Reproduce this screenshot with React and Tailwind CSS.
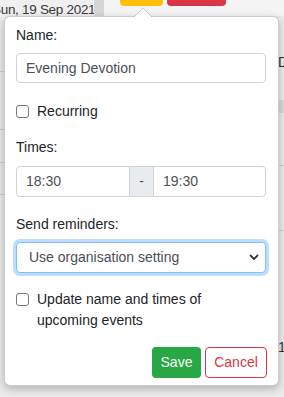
import React, { useState } from 'react'

const Check = ({ checked, onChange }) => (
  <button
    type="button"
    onClick={onChange}
    className="w-[13px] h-[13px] shrink-0 rounded-[3px] border border-[#7a7a7a] bg-white flex items-center justify-center"
  >
    {checked && <span className="block w-[7px] h-[7px] bg-[#2d7ff9] rounded-[1px]" />}
  </button>
)

const App = () => {

  const [name, setName] = useState("Evening Devotion")
  const [recurring, setRecurring] = useState(false)
  const [start, setStart] = useState("18:30")
  const [end, setEnd] = useState("19:30")
  const [reminder, setReminder] = useState("org")
  const [updateAll, setUpdateAll] = useState(false)

  return (
    <div className="relative w-[284px] h-[397px] overflow-hidden bg-[#ececec] text-[14px] text-[#212529] font-['Liberation_Sans',Arial,sans-serif]">

      {/* page behind the popover */}
      <div className="flex h-full">
        <div className="w-[94px] flex flex-col">
          <div className="h-[20px] overflow-hidden bg-[#efefef]">
            <p className="ml-[-8px] text-[13.5px] leading-[20px] tracking-[-0.3px] text-[#3a3a3a] whitespace-nowrap">Sun, 19 Sep 2021</p>
          </div>
          <div className="h-[52px] bg-[#e9e9e9] border-b border-[#cfcfcf]" />
          <div className="h-[58px] bg-[#e9e9e9] border-b border-[#cfcfcf]" />
          <div className="h-[33px] bg-[#e9e9e9] border-b border-[#cfcfcf]" />
          <div className="h-[32px] bg-[#e9e9e9] border-b border-[#cfcfcf]" />
          <div className="flex-1" />
        </div>
        <div className="w-[10px] flex flex-col">
          <div className="h-[16px] bg-[#d6d6d6]" />
        </div>
        <div className="flex-1 flex flex-col">
          <div className="h-[16px] bg-[#f4f4f4] flex gap-[4px] pl-[16px]">
            <div className="w-[43px] h-[6px] rounded-b-[4px] bg-[#ffc107]" />
            <div className="w-[59px] h-[6px] rounded-b-[4px] bg-[#dc3545]" />
          </div>
          <div className="flex-1 flex flex-col items-end">
            <div className="w-[6px] mt-[36px] h-[21px] overflow-hidden text-[#333] leading-[21px]">D</div>
            <div className="w-[6px] mt-[27px] h-[13px] bg-[#dadada]" />
            <div className="w-[6px] mt-[52px] border-b border-[#d0d0d0]" />
            <div className="w-[6px] mt-[64px] border-b border-[#d0d0d0]" />
            <div className="w-[6px] mt-[106px] h-[21px] overflow-hidden text-[#333] leading-[21px]">1</div>
          </div>
        </div>
      </div>

      {/* popover */}
      <div className="absolute left-[4px] top-[16px] w-[275px] bg-white border border-black/20 rounded-[6px] shadow-[0_3px_8px_rgba(0,0,0,0.25)] px-[11px] pt-[8px] pb-[7px]">

        <svg className="absolute left-[129px] top-[-9px]" width="18" height="9" viewBox="0 0 18 9">
          <path d="M0 9 L9 0 L18 9" fill="white" stroke="rgba(0,0,0,0.2)" strokeWidth="1" />
          <rect x="1" y="8.5" width="16" height="1" fill="white" />
        </svg>

        <p className="leading-[21px]">Name:</p>
        <input
          value={name}
          onChange={e => setName(e.target.value)}
          className="mt-[7px] w-[250px] h-[30px] px-[9px] border border-[#ced4da] rounded-[4px] text-[#495057] text-[14px] outline-none"
        />

        <label className="mt-[18px] flex items-center gap-[8px] leading-[21px]">
          <Check checked={recurring} onChange={() => setRecurring(!recurring)} />
          <span>Recurring</span>
        </label>

        <p className="mt-[15px] leading-[21px]">Times:</p>
        <div className="mt-[8px] flex w-[250px] h-[31px]">
          <input
            value={start}
            onChange={e => setStart(e.target.value)}
            className="w-[114px] px-[9px] border border-[#ced4da] rounded-l-[4px] text-[#495057] text-[14px] outline-none"
          />
          <span className="w-[23px] flex items-center justify-center bg-[#e9ecef] border-y border-[#ced4da] text-[#495057]">-</span>
          <input
            value={end}
            onChange={e => setEnd(e.target.value)}
            className="w-[113px] px-[9px] border border-[#ced4da] rounded-r-[4px] text-[#495057] text-[14px] outline-none"
          />
        </div>

        <p className="mt-[17px] leading-[21px]">Send reminders:</p>
        <div className="relative mt-[7px] w-[250px] h-[31px]">
          <select
            value={reminder}
            onChange={e => setReminder(e.target.value)}
            className="appearance-none w-full h-full pl-[12px] pr-[24px] border border-[#80bdff] rounded-[4px] shadow-[0_0_0_3px_rgba(0,123,255,0.25)] text-[#495057] text-[14px] bg-white outline-none"
          >
            <option value="org">Use organisation setting</option>
            <option value="on">Always</option>
            <option value="off">Never</option>
          </select>
          <svg className="absolute right-[7px] top-[12px] pointer-events-none" width="10" height="7" viewBox="0 0 10 7">
            <path d="M1.5 1.5 L5 5 L8.5 1.5" fill="none" stroke="#343a40" strokeWidth="1.8" strokeLinecap="round" strokeLinejoin="round" />
          </svg>
        </div>

        <label className="mt-[16px] flex items-start gap-[8px] leading-[21px]">
          <span className="mt-[4px]">
            <Check checked={updateAll} onChange={() => setUpdateAll(!updateAll)} />
          </span>
          <span>Update name and times of<br />upcoming events</span>
        </label>

        <div className="mt-[16px] flex justify-end gap-[4px]">
          <button className="w-[49px] h-[31px] rounded-[4px] bg-[#28a745] text-white text-[14px]">Save</button>
          <button className="w-[62px] h-[31px] rounded-[4px] border border-[#dc3545] text-[#dc3545] bg-white text-[14px]">Cancel</button>
        </div>
      </div>
    </div>
  )
}

export default App
